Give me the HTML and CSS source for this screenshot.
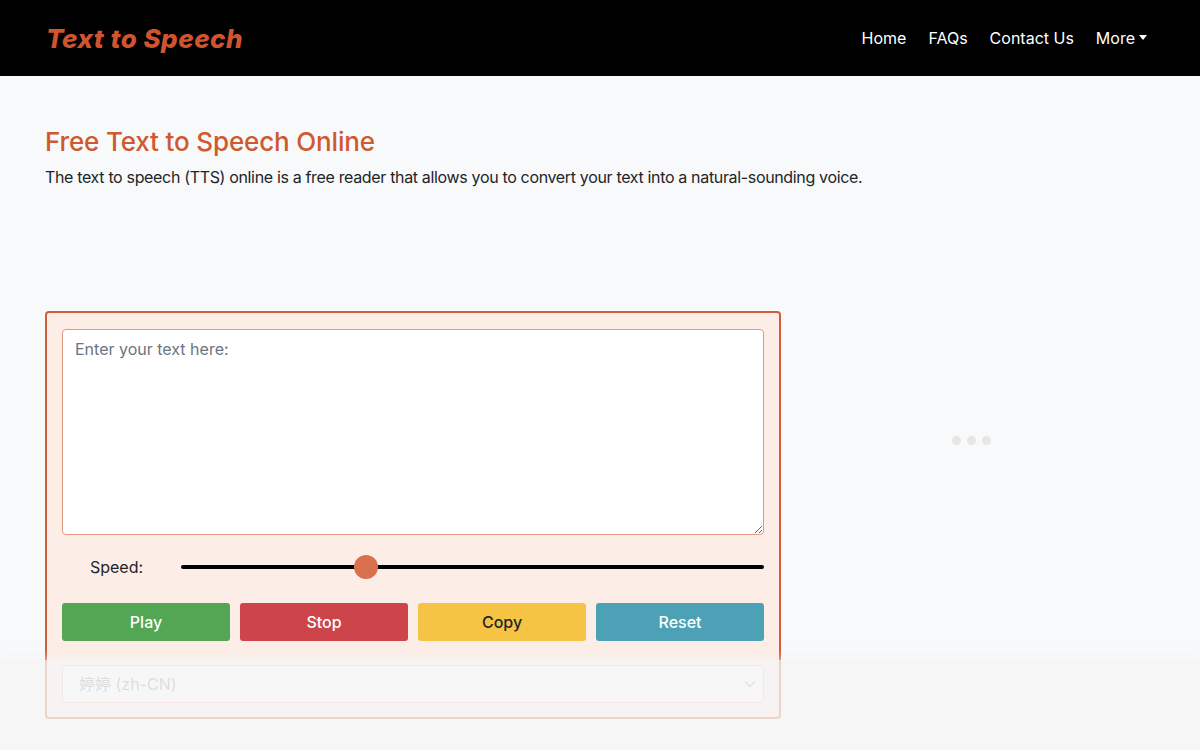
FILE: index.html
```html
<!DOCTYPE html>
<html lang="en">
<head>
<meta charset="utf-8">
<title>Free Text to Speech Online</title>
<link rel="stylesheet" href="styles.css">
</head>
<body>
<header class="navbar">
  <div class="nav-inner">
    <a class="brand" href="#">Text to Speech</a>
    <ul class="nav-links">
      <li><a href="#">Home</a></li>
      <li><a href="#">FAQs</a></li>
      <li><a href="#">Contact Us</a></li>
      <li><a href="#" class="dropdown">More<span class="caret"></span></a></li>
    </ul>
  </div>
</header>

<main class="container">
  <h1 class="title">Free Text to Speech Online</h1>
  <p class="lead">The text to speech (TTS) online is a free reader that allows you to convert your text into a natural-sounding voice.</p>

  <div class="row">
    <section class="tts-card">
      <textarea class="text-input" placeholder="Enter your text here:"></textarea>
      <div class="speed-row">
        <label class="speed-label" for="speed">Speed:</label>
        <input class="speed-range" id="speed" type="range" min="0.1" max="3" step="0.1" value="1">
      </div>
      <div class="btn-grid">
        <button class="btn btn-play">Play</button>
        <button class="btn btn-stop">Stop</button>
        <button class="btn btn-copy">Copy</button>
        <button class="btn btn-reset">Reset</button>
      </div>
      <div class="select-wrap">
        <select class="voice-select">
          <option>婷婷 (zh-CN)</option>
        </select>
        <svg class="chevron" width="12" height="8" viewBox="0 0 12 8"><path d="M1 1.5l5 5 5-5" fill="none" stroke="#9a9a9a" stroke-width="1.2"/></svg>
      </div>
    </section>
    <aside class="side">
      <div class="dots"><span></span><span></span><span></span></div>
    </aside>
  </div>
</main>

<div class="bottom-veil"></div>
</body>
</html>
```

FILE: styles.css
```css
* { box-sizing: border-box; }

html, body {
  margin: 0;
  padding: 0;
}

body {
  background: #f8f9fa;
  font-family: Inter, "Noto Sans", "Noto Sans CJK SC", sans-serif;
  color: #212529;
  font-size: 16px;
  line-height: 1.5;
  height: 750px;
  overflow: hidden;
}

.navbar {
  background: #000;
  height: 76px;
}

.nav-inner {
  width: 1110px;
  margin: 0 auto;
  height: 100%;
  display: flex;
  align-items: center;
  justify-content: space-between;
}

.brand {
  font-family: Inter, "Open Sans", sans-serif;
  font-style: italic;
  font-weight: 800;
  font-size: 26px;
  color: #d0552e;
  text-decoration: none;
  letter-spacing: 0.5px;
  margin-left: 1px;
  margin-top: 1px;
}

.nav-links {
  list-style: none;
  margin: 0 8px 0 0;
  padding: 0;
  display: flex;
  gap: 22px;
}

.nav-links a {
  color: #fff;
  text-decoration: none;
  font-size: 16px;
  font-weight: 400;
  display: flex;
  align-items: center;
}

.caret {
  display: inline-block;
  margin-left: 4px;
  border-top: 5px solid #fff;
  border-left: 4.5px solid transparent;
  border-right: 4.5px solid transparent;
  margin-top: -2px;
}

.container {
  width: 1110px;
  margin: 0 auto;
}

.title {
  margin: 50px 0 8px;
  font-size: 26px;
  font-weight: 500;
  line-height: 1.2;
  color: #cf5a2f;
  letter-spacing: -0.15px;
}

.lead {
  margin: 0;
  font-size: 16px;
  letter-spacing: -0.34px;
}

.row {
  display: flex;
  margin-top: 122px;
}

.tts-card {
  flex: none;
  width: 736px;
  background: #fcede7;
  border: 2px solid #cf5f3a;
  border-radius: 4px;
  padding: 16px 15px 14px;
}

.text-input {
  display: block;
  width: 100%;
  height: 206px;
  border: 1px solid #e19a80;
  border-radius: 4px;
  background: #fff;
  padding: 7px 12px;
  font-family: inherit;
  font-size: 16px;
  line-height: 1.5;
  color: #495057;
  resize: vertical;
}

.text-input::placeholder {
  color: #6c757d;
}

.speed-row {
  display: flex;
  align-items: center;
  height: 40px;
  margin-top: 12px;
}

.speed-label {
  width: 109px;
  margin-right: 10px;
  text-align: center;
  font-size: 16px;
  color: #212529;
}

.speed-range {
  -webkit-appearance: none;
  appearance: none;
  flex: 1;
  margin: 0;
  height: 24px;
  background: transparent;
}

.speed-range::-webkit-slider-runnable-track {
  height: 4px;
  background: #000;
  border-radius: 2px;
}

.speed-range::-webkit-slider-thumb {
  -webkit-appearance: none;
  width: 24px;
  height: 24px;
  border-radius: 50%;
  background: #d9704e;
  margin-top: -10px;
  border: none;
}

.btn-grid {
  display: grid;
  grid-template-columns: repeat(4, 1fr);
  gap: 10px;
  margin-top: 16px;
}

.btn {
  height: 38px;
  border: none;
  border-radius: 3px;
  font-family: inherit;
  font-size: 16px;
  font-weight: 500;
  color: #fff;
  cursor: pointer;
}

.btn-play { background: #53a653; }
.btn-stop { background: #cd444b; }
.btn-copy { background: #f6c444; color: #212529; }
.btn-reset { background: #4ca1b7; }

.select-wrap {
  position: relative;
  margin-top: 24px;
}

.voice-select {
  -webkit-appearance: none;
  appearance: none;
  display: block;
  width: 100%;
  height: 38px;
  border: 1px solid #e8b6a2;
  border-radius: 4px;
  background: #fff;
  padding: 0 16px;
  font-family: Inter, "Noto Sans CJK SC", sans-serif;
  font-size: 16px;
  color: #8a8a8a;
}

.chevron {
  position: absolute;
  right: 8px;
  top: 15px;
}

.side {
  flex: 1;
  display: flex;
  align-items: flex-start;
  justify-content: flex-start;
  padding-left: 171px;
  padding-top: 125px;
}

.dots {
  display: flex;
  gap: 6px;
}

.dots span {
  width: 9px;
  height: 9px;
  border-radius: 50%;
  background: #e6e6e6;
}

.bottom-veil {
  position: fixed;
  left: 0;
  right: 0;
  bottom: 0;
  height: 90px;
  background: rgba(245, 245, 245, 0.78);
  box-shadow: 0 -3px 8px rgba(245, 245, 245, 0.5);
}
```
